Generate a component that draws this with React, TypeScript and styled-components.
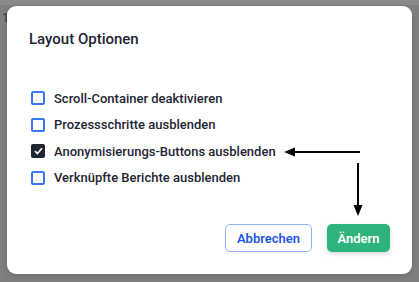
import styled, { createGlobalStyle } from "styled-components";

const Global = createGlobalStyle`
  html, body { margin: 0; padding: 0; }
  body { font-family: Roboto, "Liberation Sans", sans-serif; }
`;

const options = [
  { label: "Scroll-Container deaktivieren", checked: false },
  { label: "Prozessschritte ausblenden", checked: false },
  { label: "Anonymisierungs-Buttons ausblenden", checked: true },
  { label: "Verknüpfte Berichte ausblenden", checked: false },
];

function App() {
  return (
    <Backdrop>
      <Global />
      <PageBehind>1</PageBehind>
      <Dialog>
        <Title>Layout Optionen</Title>
        <List>
          {options.map((o) => (
            <Row key={o.label}>
              <Box $checked={o.checked}>
                {o.checked && (
                  <svg width="9" height="8" viewBox="0 0 9 8">
                    <path d="M1 4.2 L3.4 6.5 L8 1.3" fill="none" stroke="#fff" strokeWidth="1.7" />
                  </svg>
                )}
              </Box>
              <Label>{o.label}</Label>
            </Row>
          ))}
        </List>
        <Footer>
          <CancelButton>Abbrechen</CancelButton>
          <SaveButton>Ändern</SaveButton>
        </Footer>
        <Arrows width="405" height="268" viewBox="0 0 405 268">
          <line x1="353" y1="146" x2="286" y2="146" stroke="#000" strokeWidth="2" />
          <polygon points="277,146 288,141.5 288,150.5" fill="#000" />
          <line x1="351" y1="157" x2="351" y2="202" stroke="#000" strokeWidth="2" />
          <polygon points="351,210 346.5,199 355.5,199" fill="#000" />
        </Arrows>
      </Dialog>
    </Backdrop>
  );
}

export default App;

const Backdrop = styled.div`
  position: relative;
  width: 419px;
  height: 282px;
  box-sizing: border-box;
  padding: 6px 7px 8px 7px;
  background: linear-gradient(#8a8a8a 0 5px, #7f7f7f 5px);
  overflow: hidden;
`;

const PageBehind = styled.div`
  position: absolute;
  left: 2px;
  top: 10px;
  font-size: 13px;
  color: #333;
`;

const Dialog = styled.div`
  position: relative;
  width: 405px;
  height: 268px;
  box-sizing: border-box;
  background: #fff;
  border-radius: 9px;
  padding: 21px 22px 22px 22px;
  display: flex;
  flex-direction: column;
  box-shadow: 0 2px 6px rgba(0, 0, 0, 0.15);
`;

const Title = styled.div`
  font-size: 15px;
  line-height: 24px;
  font-weight: 500;
  color: #1e2533;
`;

const List = styled.div`
  display: flex;
  flex-direction: column;
  gap: 0.5px;
  margin-top: 34px;
  padding-left: 2px;
`;

const Row = styled.div`
  display: flex;
  align-items: center;
  gap: 9px;
  height: 26px;
`;

const Box = styled.div<{ $checked: boolean }>`
  width: 14px;
  height: 14px;
  box-sizing: border-box;
  border-radius: 2px;
  border: 2px solid ${(p) => (p.$checked ? "#1e2533" : "#3a76f6")};
  background: ${(p) => (p.$checked ? "#1e2533" : "#fff")};
  display: flex;
  align-items: center;
  justify-content: center;
`;

const Label = styled.span`
  font-size: 13px;
  font-weight: 500;
  color: #1e2533;
`;

const Footer = styled.div`
  margin-top: auto;
  display: flex;
  justify-content: flex-end;
  gap: 15px;
`;

const Button = styled.button`
  height: 28px;
  box-sizing: border-box;
  border-radius: 5px;
  font-family: Roboto, "Liberation Sans", sans-serif;
  font-size: 13px;
  font-weight: 600;
  cursor: pointer;
`;

const CancelButton = styled(Button)`
  width: 87px;
  background: #fff;
  border: 1.5px solid #8fb0fb;
  color: #1f55e0;
`;

const SaveButton = styled(Button)`
  width: 63px;
  background: #2db37b;
  border: none;
  color: #fff;
  box-shadow: 0 2px 4px rgba(0, 0, 0, 0.15);
`;

const Arrows = styled.svg`
  position: absolute;
  left: 0;
  top: 0;
  pointer-events: none;
`;
